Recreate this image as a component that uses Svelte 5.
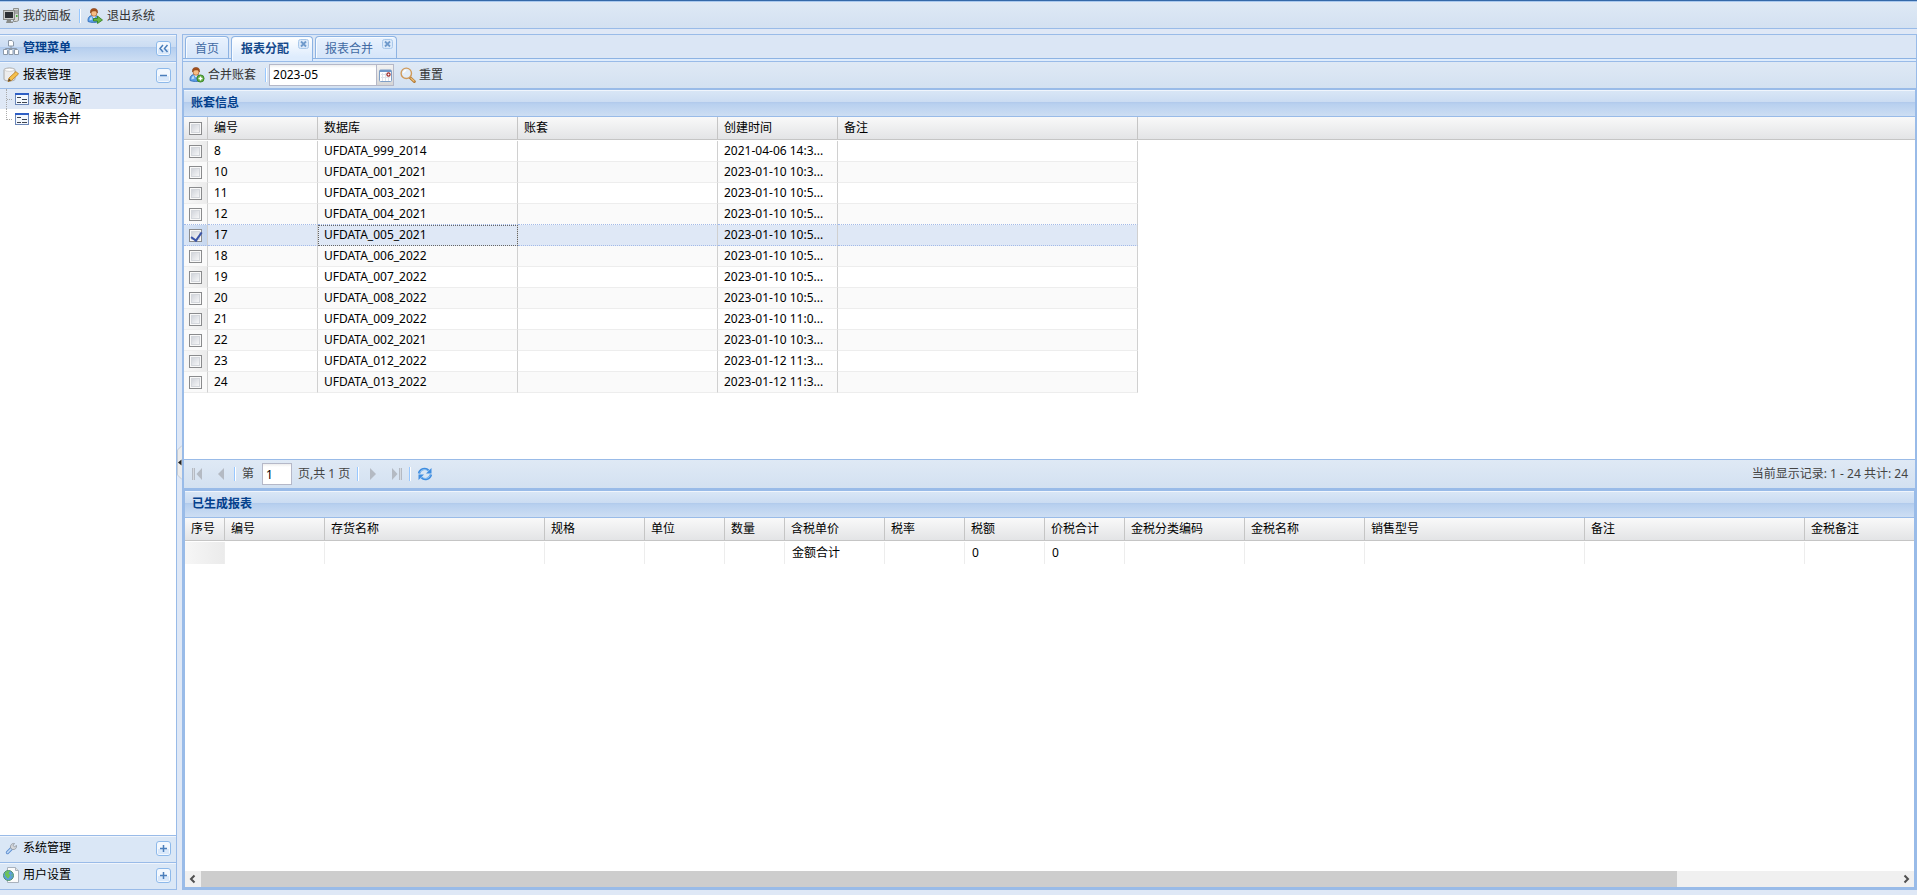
<script lang="ts">
  type Account = { id: number; db: string; created: string };

  let month = $state('2023-05');
  let page = $state('1');
  let checked = $state<Record<number, boolean>>({ 17: true });

  const accounts: Account[] = [
    { id: 8, db: 'UFDATA_999_2014', created: '2021-04-06 14:3...' },
    { id: 10, db: 'UFDATA_001_2021', created: '2023-01-10 10:3...' },
    { id: 11, db: 'UFDATA_003_2021', created: '2023-01-10 10:5...' },
    { id: 12, db: 'UFDATA_004_2021', created: '2023-01-10 10:5...' },
    { id: 17, db: 'UFDATA_005_2021', created: '2023-01-10 10:5...' },
    { id: 18, db: 'UFDATA_006_2022', created: '2023-01-10 10:5...' },
    { id: 19, db: 'UFDATA_007_2022', created: '2023-01-10 10:5...' },
    { id: 20, db: 'UFDATA_008_2022', created: '2023-01-10 10:5...' },
    { id: 21, db: 'UFDATA_009_2022', created: '2023-01-10 11:0...' },
    { id: 22, db: 'UFDATA_002_2021', created: '2023-01-10 10:3...' },
    { id: 23, db: 'UFDATA_012_2022', created: '2023-01-12 11:3...' },
    { id: 24, db: 'UFDATA_013_2022', created: '2023-01-12 11:3...' },
  ];

  const reportCols = [
    { title: '序号', width: 40, total: '' },
    { title: '编号', width: 100, total: '' },
    { title: '存货名称', width: 220, total: '' },
    { title: '规格', width: 100, total: '' },
    { title: '单位', width: 80, total: '' },
    { title: '数量', width: 60, total: '' },
    { title: '含税单价', width: 100, total: '金额合计' },
    { title: '税率', width: 80, total: '' },
    { title: '税额', width: 80, total: '0' },
    { title: '价税合计', width: 80, total: '0' },
    { title: '金税分类编码', width: 120, total: '' },
    { title: '金税名称', width: 120, total: '' },
    { title: '销售型号', width: 220, total: '' },
    { title: '备注', width: 220, total: '' },
    { title: '金税备注', width: 220, total: '' },
  ];
</script>

{#snippet user(kind: string)}
  <svg class="icon" viewBox="0 0 16 16" aria-hidden="true">
    <path d="M1 13.5C.6 10 2 8 4.500 7.500h4c2.500.5 3.500 2.500 3.500 6-3 1.300-8 1.300-11 0z" fill="#5b9ee8" stroke="#2f68b4" stroke-width=".8" />
    <path d="M2.500 12.500c0-2 .7-3.300 2-4l1 3z" fill="#b9dcfb" />
    <path d="M5 7.500l2 3 2-3z" fill="#fff" />
    <ellipse cx="7" cy="4.800" rx="3" ry="3.500" fill="#f6bd85" stroke="#a8622e" stroke-width=".7" />
    <path d="M3.600 5C3 1.500 4.800.5 7 .5s4 1 3.400 4.500C9.800 3.300 9 3 7.500 3 5.500 3 4.200 3.300 3.600 5z" fill="#a4511c" stroke="#7c3a12" stroke-width=".5" />
    {#if kind === 'go'}
      <path d="M6.500 10.500h4v-2.500l5 4-5 3.500v-2.500h-4z" fill="#6bb544" stroke="#2f7d1d" stroke-width=".8" />
    {:else}
      <circle cx="11.500" cy="11.500" r="3.600" fill="#5dab3b" stroke="#347d20" stroke-width=".8" />
      <path d="M11.500 9.500v4M9.500 11.500h4" stroke="#fff" stroke-width="1.400" />
    {/if}
  </svg>
{/snippet}

{#snippet form()}
  <svg class="icon" viewBox="0 0 16 16" aria-hidden="true" shape-rendering="crispEdges">
    <rect x=".5" y="2.500" width="13" height="11" fill="#f4f8fd" stroke="#6b86b8" />
    <path d="M0 2h14v2H0z" fill="#2f5fc4" />
    <path d="M2 6.500h4M7 8.500h5M2 11.500h4M7 11.500h5" stroke="#3f4652" />
  </svg>
{/snippet}

{#snippet tool(d: string)}
  <svg class="tool-icon" viewBox="0 0 15 15" aria-hidden="true">
    <rect x=".5" y=".5" width="14" height="14" rx="2.500" fill="#f3f8fe" stroke="#8db9ea" />
    <path d="M2 8h11v5H2z" fill="#d9e8fa" />
    <path {d} fill="none" stroke="#4a7ebb" stroke-width="1.500" />
  </svg>
{/snippet}

{#snippet closeIcon()}
  <svg class="close" viewBox="0 0 11 11" aria-hidden="true">
    <rect x=".5" y=".5" width="10" height="9" rx="2" fill="#dbe9fa" stroke="#a9c8ea" />
    <path d="M3 2.500l5 5M8 2.500l-5 5" stroke="#6f9acb" stroke-width="1.800" />
  </svg>
{/snippet}

{#snippet pager(d: string, bar: string)}
  <svg class="icon" viewBox="0 0 16 16" aria-hidden="true">
    <path {d} fill="#b4bac3" />
    <path d={bar} stroke="#b4bac3" stroke-width="3" />
    <path d={bar} stroke="#d5dae1" />
  </svg>
{/snippet}

<div class="viewport">
  <header class="top-bar">
    <button type="button">
      <svg class="icon" viewBox="0 0 16 16" aria-hidden="true">
        <path d="M10.500.5h5v12l-2 1h-3z" fill="#d5d7d4" stroke="#8c8f8c" />
        <path d="M12 3h3M12 5h3" stroke="#777" />
        <path d="M13 7h1.500v2H13z" fill="#49b13b" />
        <rect x=".5" y="2.500" width="11" height="9" fill="#c9cbc9" stroke="#8a8c8a" />
        <rect x="2" y="4" width="8" height="6" fill="#2c2f33" />
        <path d="M4 12h4v1.500h2v1.500H3z" fill="#888b88" />
      </svg>
      我的面板
    </button>
    <span class="sep"></span>
    <button type="button">{@render user('go')}退出系统</button>
  </header>

  <div class="body">
    <aside class="sidebar">
      <div class="panel-title side-title">
        <svg class="icon" viewBox="0 0 16 16" aria-hidden="true">
          <path d="M8 5v4M2.500 10V8.500h11V10" fill="none" stroke="#8b98a8" />
          <path d="M5.500.5h3.500l1.500 1.500v4h-5zM.5 9.500h3l1 1v4h-4zM6 9.500h3l1 1v4H6zM11.500 9.500h3l1 1v4h-4z" fill="#fff" stroke="#8b98a8" />
        </svg>
        <span>管理菜单</span>
        <button type="button" class="tool" aria-label="收起">{@render tool('M7 4L4 7.500 7 11M11.500 4L8.500 7.500 11.500 11')}</button>
      </div>
      <div class="accordion">
        <svg class="icon" viewBox="0 0 16 16" aria-hidden="true">
          <path d="M1 2.500C3 .5 10 .5 12 2.500v10c-2 2-9 2-11 0z" fill="#ededed" stroke="#aaa" />
          <ellipse cx="6.500" cy="2.800" rx="4.800" ry="1.500" fill="#fff" stroke="#bbb" stroke-width=".6" />
          <path d="M5 14.500l1-3.500 7-6.500 2.500 2.500-7 6.500z" fill="#f5c04c" stroke="#b8791a" stroke-width=".8" />
          <path d="M5 14.500l1-3 2 2z" fill="#5a4630" />
        </svg>
        <span>报表管理</span>
        <button type="button" class="tool" aria-label="折叠">{@render tool('M4 7.500h7')}</button>
      </div>
      <nav class="tree">
        <a href="#assign" class="active"><i class="elbow"></i>{@render form()}报表分配</a>
        <a href="#merge"><i class="elbow last"></i>{@render form()}报表合并</a>
      </nav>
      <div class="accordion foot">
        <svg class="icon" viewBox="0 0 16 16" aria-hidden="true">
          <path d="M4.500 12.500L9 8" stroke="#5f8fd0" stroke-width="3.400" stroke-linecap="round" />
          <path d="M4.500 12.500L8.500 8.500" stroke="#c3dcf8" stroke-width="1.600" stroke-linecap="round" />
          <path d="M7.500 8C7 5 9 3 11.500 3.500l-1.500 2 1.500 1.200L13.500 5.500c.5 2.500-1.500 4.500-4 4z" fill="#d5d7da" stroke="#8e949c" stroke-width=".8" />
        </svg>
        <span>系统管理</span>
        <button type="button" class="tool" aria-label="展开">{@render tool('M4 7.500h7M7.500 4v7')}</button>
      </div>
      <div class="accordion foot">
        <svg class="icon" viewBox="0 0 16 16" aria-hidden="true">
          <path d="M4.500.5h8l3 3v12h-11z" fill="#fbfbfb" stroke="#a9b2bd" />
          <path d="M12.500.5v3h3" fill="#e4e4e4" stroke="#a9b2bd" />
          <circle cx="5.500" cy="8.500" r="5" fill="#5a9de0" stroke="#4f9366" />
          <path d="M2 6c1.500-2.500 4-2.800 5-1.800L5.500 6.500l2 1.500-2 3.500C3.500 11.500 4 9.500 2 8.500z" fill="#6cc25a" />
          <path d="M8.500 6.500l1.200 1.500-1 2z" fill="#6cc25a" />
        </svg>
        <span>用户设置</span>
        <button type="button" class="tool" aria-label="展开">{@render tool('M4 7.500h7M7.500 4v7')}</button>
      </div>
    </aside>

    <div class="splitter">
      <button type="button" aria-label="隐藏菜单">
        <svg viewBox="0 0 5 35" aria-hidden="true">
          <path d="M5 .5L.5 5v25L5 34.500" fill="#ececec" stroke="#c3cbd6" />
          <path d="M4.500 14.500v6l-3.500-3z" fill="#222" />
        </svg>
      </button>
    </div>

    <main class="center">
      <div class="tabs" role="tablist">
        <button type="button" role="tab" aria-selected="false">首页</button>
        <button type="button" role="tab" aria-selected="true" class="closable active">报表分配{@render closeIcon()}</button>
        <button type="button" role="tab" aria-selected="false" class="closable">报表合并{@render closeIcon()}</button>
      </div>

      <div class="toolbar">
        <button type="button">{@render user('add')}合并账套</button>
        <span class="sep"></span>
        <div class="date-field">
          <input type="text" aria-label="月份" bind:value={month} />
          <button type="button" aria-label="选择月份">
            <svg viewBox="0 0 13 13" aria-hidden="true">
              <rect x=".5" y="1" width="12" height="11.500" rx="1" fill="#fff" stroke="#7f9fc6" />
              <path d="M1 1h11v2H1z" fill="#6f97c9" />
              <path d="M2 5.500h9M2 8.500h9M3.500 4v8M6.500 4v8M9.500 8v4" stroke="#dde3eb" />
              <circle cx="9.500" cy="5.500" r="1.600" fill="#fff" stroke="#9c2626" stroke-width="1.200" />
            </svg>
          </button>
        </div>
        <button type="button">
          <svg class="icon" viewBox="0 0 16 16" aria-hidden="true">
            <path d="M10 10.500l4.300 4" stroke="#b27932" stroke-width="3" stroke-linecap="round" />
            <path d="M11 11.200l3 2.800" stroke="#f0c078" stroke-width="1.200" stroke-linecap="round" />
            <circle cx="6.300" cy="6.300" r="5.200" fill="#e3edf7" stroke="#cf9a5b" stroke-width="1.400" />
            <path d="M3.500 6c.2-1.600 1.200-2.500 2.800-2.700" fill="none" stroke="#fff" stroke-width="1.200" />
          </svg>
          重置
        </button>
      </div>

      <section class="accounts">
        <h2 class="panel-title">账套信息</h2>
        <div class="grid-body">
          <table>
            <colgroup>
              <col class="w-check" /><col class="w-id" /><col class="w-db" /><col class="w-db" />
              <col class="w-time" /><col class="w-note" /><col />
            </colgroup>
            <thead>
              <tr>
                <th class="check"><input type="checkbox" aria-label="全选" /></th>
                <th>编号</th>
                <th>数据库</th>
                <th>账套</th>
                <th>创建时间</th>
                <th>备注</th>
                <th class="rest"></th>
              </tr>
            </thead>
            <tbody>
              {#each accounts as row (row.id)}
                <tr class:selected={checked[row.id]}>
                  <td class="check"><input type="checkbox" aria-label={row.db} bind:checked={checked[row.id]} /></td>
                  <td>{row.id}</td>
                  <td class:focused={row.id === 17}>{row.db}</td>
                  <td></td>
                  <td>{row.created}</td>
                  <td></td>
                  <td class="rest"></td>
                </tr>
              {/each}
            </tbody>
          </table>
        </div>
        <div class="paging">
          <button type="button" aria-label="首页" disabled>{@render pager('M12 2v12L6.500 8z', 'M3.500 2v12')}</button>
          <button type="button" aria-label="上一页" disabled>{@render pager('M11 2v12L5 8z', '')}</button>
          <span class="sep"></span>
          <label for="page">第</label>
          <input id="page" type="text" bind:value={page} />
          <span class="of">页,共 1 页</span>
          <span class="sep"></span>
          <button type="button" aria-label="下一页" disabled>{@render pager('M5 2v12l6-6z', '')}</button>
          <button type="button" aria-label="末页" disabled>{@render pager('M4 2v12l5.500-6z', 'M12.500 2v12')}</button>
          <span class="sep"></span>
          <button type="button" aria-label="刷新">
            <svg class="icon" viewBox="0 0 16 16" aria-hidden="true">
              <path d="M2 7.500C3 3 8.500 1.500 11.500 4.500" fill="none" stroke="#3f8de0" stroke-width="2.400" />
              <path d="M14.500 2v5.500H9z" fill="#3f8de0" />
              <path d="M14 8.500c-1 4.500-6.500 6-9.500 3" fill="none" stroke="#3f8de0" stroke-width="2.400" />
              <path d="M1.500 14V8.500H7z" fill="#3f8de0" />
              <path d="M3 6.500C4.500 3.500 8 3 10.500 4.800M13 9.500c-1.500 3-5 3.500-7.500 1.700" fill="none" stroke="#b9dcfc" stroke-width=".9" />
            </svg>
          </button>
          <span class="info">当前显示记录: 1 - 24 共计: 24</span>
        </div>
      </section>

      <section class="reports">
        <h2 class="panel-title">已生成报表</h2>
        <div class="report-body">
          <table>
            <colgroup>
              {#each reportCols as col}
                <col style:width="{col.width}px" />
              {/each}
            </colgroup>
            <thead>
              <tr>
                {#each reportCols as col}
                  <th>{col.title}</th>
                {/each}
              </tr>
            </thead>
            <tbody>
              <tr>
                {#each reportCols as col}
                  <td>{col.total}</td>
                {/each}
              </tr>
            </tbody>
          </table>
        </div>
        <div class="scroll">
          <button type="button" aria-label="向左滚动">
            <svg viewBox="0 0 16 16" aria-hidden="true"><path d="M9.500 4.500L6 8l3.500 3.500" fill="none" stroke="#505050" stroke-width="2" /></svg>
          </button>
          <div class="track"><div class="thumb"></div></div>
          <button type="button" aria-label="向右滚动">
            <svg viewBox="0 0 16 16" aria-hidden="true"><path d="M6.500 4.500L10 8l-3.500 3.500" fill="none" stroke="#505050" stroke-width="2" /></svg>
          </button>
        </div>
      </section>
    </main>
  </div>
</div>

<style>
  :global(body) {
    margin: 0;
    background: #dfe8f6;
  }

  .viewport {
    display: flex;
    flex-direction: column;
    height: 100vh;
    box-sizing: border-box;
    overflow: hidden;
    font: 12px/16px 'Noto Sans', 'Noto Sans CJK SC', sans-serif;
    color: #000;
    background: #dfe8f6;
  }

  .viewport * {
    box-sizing: border-box;
  }

  button {
    display: flex;
    align-items: center;
    padding: 0;
    border: 0;
    background: none;
    font: inherit;
    color: #333;
    white-space: nowrap;
    cursor: pointer;
  }

  input {
    font: inherit;
    color: #000;
  }

  .icon {
    flex: none;
    width: 16px;
    height: 16px;
  }

  .sep {
    width: 2px;
    height: 14px;
    background: #98c8ff;
    border-right: 1px solid #fff;
  }

  .top-bar {
    display: flex;
    align-items: center;
    gap: 8px;
    height: 29px;
    padding: 2px 0 0 3px;
    border-top: 1px solid #3468a8;
    border-bottom: 1px solid #99bbe8;
    background: linear-gradient(#dfe9f5, #d3e1f1);
    box-shadow: inset 0 1px #a9c8ee;
  }

  .top-bar button {
    gap: 4px;
  }

  .top-bar .sep {
    margin-right: -2px;
  }

  .body {
    display: flex;
    flex: 1;
    min-height: 0;
    padding: 5px 0;
  }

  .panel-title {
    height: 27px;
    margin: 0;
    padding: 4px 7px;
    border-bottom: 1px solid #99bbe8;
    background: linear-gradient(#dae7f6 0, #cbdcf2 12px, #b0c9eb 12px, #b8d0ef 14px, #cddef3 26px);
    box-shadow: inset 0 1px #f0f5fc;
    font-size: 12px;
    line-height: 18px;
    font-weight: bold;
    color: #04408c;
  }

  .sidebar {
    display: flex;
    flex-direction: column;
    width: 177px;
    border: 1px solid #99bbe8;
    border-left: 0;
  }

  .side-title,
  .accordion {
    display: flex;
    align-items: center;
    gap: 4px;
    padding: 0 5px 0 3px;
  }

  .accordion {
    height: 27px;
    border-bottom: 1px solid #99bbe8;
    background: #dae7f6;
    box-shadow: inset 0 1px #f0f5fc;
  }

  .foot {
    padding-bottom: 2px;
    border-top: 1px solid #99bbe8;
    border-bottom: 0;
  }

  .tool {
    margin-left: auto;
  }

  .tool-icon {
    width: 15px;
    height: 15px;
  }

  .tree {
    flex: 1;
    background: #fff;
  }

  .tree a {
    display: flex;
    align-items: center;
    gap: 2px;
    height: 20px;
    padding-left: 6px;
    color: #000;
    text-decoration: none;
  }

  .tree .active {
    background: #dfe8f6;
  }

  .elbow {
    align-self: stretch;
    width: 7px;
    border-left: 1px dotted #aaa;
    background: repeating-linear-gradient(90deg, #aaa 0 1px, transparent 1px 2px) 0 10px / 7px 1px no-repeat;
  }

  .elbow.last {
    height: 11px;
    align-self: flex-start;
  }

  .splitter {
    display: flex;
    align-items: center;
    width: 5px;
  }

  .splitter svg {
    width: 5px;
    height: 35px;
  }

  .center {
    display: flex;
    flex: 1;
    flex-direction: column;
    min-width: 0;
    border: 1px solid #99bbe8;
  }

  .tabs {
    display: flex;
    gap: 2px;
    height: 27px;
    padding: 1px 2px 0;
    border-bottom: 1px solid #99bbe8;
    background: linear-gradient(#dbe6f5 0 23px, #8db3e3 23px 24px, #deecfd 24px);
  }

  .tabs button {
    align-items: flex-start;
    height: 22px;
    padding: 4px 9px 0;
    border: 1px solid #8db3e3;
    border-bottom: 0;
    border-radius: 4px 4px 0 0;
    background: linear-gradient(#e9f2fe, #d5e5f9);
    box-shadow: inset 1px 1px #f7fbff;
    color: #416aa3;
  }

  .tabs .closable {
    padding-right: 3px;
    gap: 9px;
  }

  .tabs .active {
    height: 25px;
    background: linear-gradient(#fff, #deecfd 20px);
    font-weight: bold;
    color: #15498b;
  }

  .close {
    width: 11px;
    height: 11px;
    margin-top: -2px;
  }

  .toolbar,
  .paging {
    display: flex;
    align-items: center;
    background: linear-gradient(#dfe9f5, #d3e1f1);
  }

  .toolbar {
    gap: 6px;
    height: 28px;
    padding-left: 6px;
    border-bottom: 2px solid #99bbe8;
  }

  .toolbar button {
    gap: 3px;
  }

  .toolbar .sep {
    margin-left: 3px;
    margin-right: -4px;
  }

  .date-field {
    display: flex;
    width: 125px;
    height: 22px;
  }

  .date-field input {
    flex: 1;
    min-width: 0;
    padding: 0 3px;
    border: 1px solid #b5b8c8;
    background: linear-gradient(#eee, #fff 3px);
    outline: 0;
  }

  .date-field button {
    justify-content: center;
    width: 17px;
    border: 1px solid #b5b8c8;
    border-left: 0;
    background: linear-gradient(#f2f2f2, #d6d6d6);
  }

  .date-field svg {
    flex: none;
    width: 13px;
    height: 13px;
  }

  .accounts {
    display: flex;
    flex: 398 0 0;
    flex-direction: column;
    min-height: 0;
    border: solid #99bbe8;
    border-width: 0 1px;
  }

  .grid-body,
  .report-body {
    flex: 1;
    min-height: 0;
    overflow: hidden;
    background: #fff;
  }

  table {
    width: 100%;
    table-layout: fixed;
    border-spacing: 0;
  }

  .w-check { width: 24px; }
  .w-id { width: 110px; }
  .w-db { width: 200px; }
  .w-time { width: 120px; }
  .w-note { width: 300px; }

  th {
    height: 23px;
    padding: 0 6px;
    border-right: 1px solid #c5c5c5;
    border-bottom: 1px solid #c5c5c5;
    background: linear-gradient(#f9f9f9, #e3e4e6);
    font-weight: normal;
    text-align: left;
    white-space: nowrap;
  }

  td {
    height: 21px;
    padding: 0 6px;
    border-right: 1px solid #d0d0d0;
    border-bottom: 1px solid #ededed;
    line-height: 18px;
    white-space: nowrap;
    overflow: hidden;
  }

  thead::after {
    content: '';
    display: table-row;
    height: 1px;
  }

  .accounts tr:nth-child(even) td {
    background: #fafafa;
  }

  .accounts tr .check {
    padding: 0 5px;
    background: linear-gradient(90deg, #f8f8f8, #ebebeb);
  }

  .accounts th.check {
    background: linear-gradient(#f9f9f9, #e3e4e6);
  }

  .accounts .selected td {
    border-bottom: 1px dotted #a3bae9;
    background: #dfe8f6;
  }

  .accounts tr:has(+ .selected) td {
    border-bottom: 1px dotted #a3bae9;
  }

  .accounts .selected .check {
    background: linear-gradient(90deg, #dbe6f6, #c6d7ef);
  }

  .focused {
    outline: 1px dotted #666;
    outline-offset: -1px;
  }

  .accounts tr .rest {
    border-right: 0;
  }

  .accounts tbody tr .rest {
    border-bottom: 0;
    background: #fff;
  }

  input[type='checkbox'] {
    display: block;
    appearance: none;
    width: 13px;
    height: 13px;
    margin: 1px 0 0;
    border: 1px solid #8a8b8d;
    background: linear-gradient(135deg, #c8ccd4, #fff);
    box-shadow: inset 0 0 0 1px #f9f9f9, inset 0 0 0 2px #d4d7dc;
  }

  input[type='checkbox']:checked::after {
    content: '';
    display: block;
    width: 5px;
    height: 9px;
    margin: 0 0 0 3px;
    border: solid #3c56a8;
    border-width: 0 2px 2px 0;
    transform: rotate(35deg);
  }

  .paging {
    height: 29px;
    padding: 0 7px 0 2px;
    border-top: 1px solid #99bbe8;
    color: #444;
  }

  .paging button {
    width: 23px;
    justify-content: center;
  }

  .paging .sep {
    margin: 0 2px;
  }

  .paging label {
    margin: 0 8px 0 4px;
  }

  .paging input {
    width: 30px;
    height: 22px;
    padding: 0 3px;
    border: 1px solid #b5b8c8;
    background: linear-gradient(#eee, #fff 3px);
    outline: 0;
  }

  .of {
    margin: 0 5px 0 6px;
  }

  .info {
    margin-left: auto;
  }

  .reports {
    display: flex;
    flex: 396 0 0;
    flex-direction: column;
    min-height: 0;
    border: 2px solid #99bbe8;
    border-top-width: 3px;
  }

  .report-body table {
    width: 1840px;
  }

  .reports td {
    height: 22px;
    padding: 0 7px;
    border-right-color: #ededed;
    border-bottom: 0;
  }

  .reports td:first-child {
    background: linear-gradient(90deg, #f6f6f6, #ebebeb);
  }

  .scroll {
    display: flex;
    height: 16px;
    background: #f0f0f0;
  }

  .scroll svg {
    width: 16px;
    height: 16px;
  }

  .track {
    flex: 1;
  }

  .thumb {
    width: 87%;
    height: 100%;
    background: #cdcdcd;
  }
</style>
